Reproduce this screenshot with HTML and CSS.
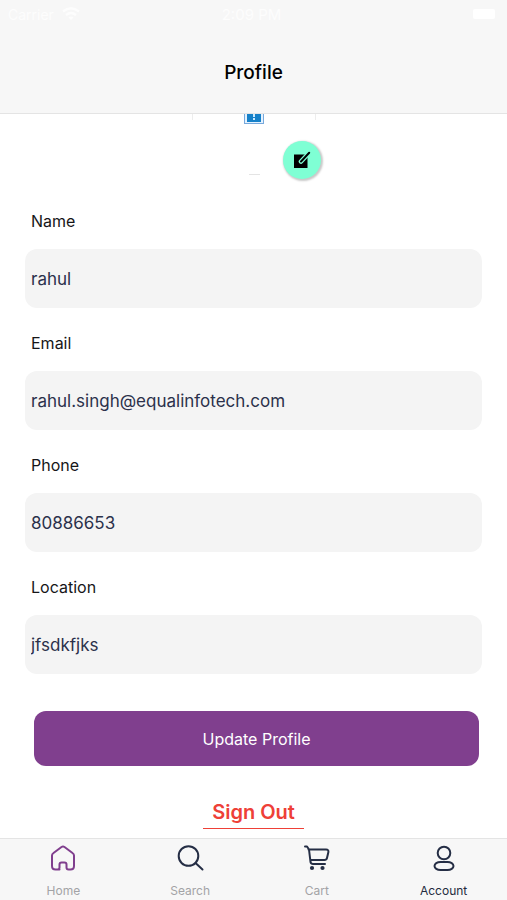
FILE: index.html
```html
<!DOCTYPE html>
<html lang="en">
<head>
<meta charset="utf-8">
<meta name="viewport" content="width=device-width, initial-scale=1">
<title>Profile</title>
<link rel="stylesheet" href="styles.css">
</head>
<body>
<header class="header">
  <div class="status">
    <span class="carrier">Carrier
      <svg width="18" height="14" viewBox="0 0 18 14" fill="none" stroke="currentColor" stroke-width="2.4" aria-hidden="true"><path d="M1 4.500Q9-2 17 4.500M4 8Q9 4 14 8"/><path d="M6.500 10.500Q9 8.500 11.500 10.500L9 13Z" fill="currentColor" stroke="none"/></svg>
    </span>
    <span class="time">2:09 PM</span>
    <span class="battery"></span>
  </div>
  <h1 class="title">Profile</h1>
</header>

<main class="content">
  <section class="photo" aria-label="Profile photo">
    <div class="frame">
      <svg width="20" height="10" viewBox="0 0 20 10" aria-hidden="true"><path fill="#78a9dc" d="M0 0h20v10H0z"/><path fill="#e4f2ff" d="M1 0h18v9H1z"/><path fill="#1681c9" d="M3 0h14v8H3z"/><path fill="#c8eaff" d="M9 0h2v3H9zM9 4h2v2H9z"/></svg>
    </div>
    <span class="dash"></span>
    <button class="edit" type="button" aria-label="Edit photo">
      <svg width="18" height="18" viewBox="0 0 18 18" fill="none" stroke-linecap="round" aria-hidden="true"><path fill="#000" d="M1 3.500h13.500V17H1z"/><path d="M15 3 8 10.500" stroke="#7fffd4" stroke-width="4.600"/><path d="M16.200 1.800 8 10.500" stroke="#000" stroke-width="2"/></svg>
    </button>
  </section>

  <form class="form">
    <label class="label" for="name">Name</label>
    <input class="input" id="name" type="text" value="rahul">
    <label class="label" for="email">Email</label>
    <input class="input" id="email" type="email" value="rahul.singh@equalinfotech.com">
    <label class="label" for="phone">Phone</label>
    <input class="input" id="phone" type="tel" value="80886653">
    <label class="label" for="location">Location</label>
    <input class="input" id="location" type="text" value="jfsdkfjks">
    <button class="update" type="button">Update Profile</button>
  </form>
  <a class="signout" href="#">Sign Out</a>
</main>

<nav class="tabs">
  <a class="tab" href="#">
    <svg class="icon home" viewBox="0 0 28 28" aria-hidden="true"><path d="M10.500 25.500H6.500Q3 25.500 3 22V11.500Q3 10 4.500 9L12.500 3Q14 2 15.500 3L23.500 9Q25 10 25 11.500V22Q25 25.500 21.500 25.500H19.500Q17.500 25.500 17.500 23.500V20.500Q17.500 18.500 15.500 18.500H12.500Q10.500 18.500 10.500 20.500V23.500Q10.500 25.500 8.500 25.500"/></svg>
    Home
  </a>
  <a class="tab" href="#">
    <svg class="icon" viewBox="0 0 28 28" aria-hidden="true"><circle cx="12.500" cy="12" r="9.800"/><path d="m19.500 19 7 6.500"/></svg>
    Search
  </a>
  <a class="tab" href="#">
    <svg class="icon" viewBox="0 0 28 28" aria-hidden="true"><path d="M2 2.500h2l2 3 1.500 12.500Q8 20 10 20H22M5.500 5.500H23Q26 5.500 25.300 8.500L24 14Q23.500 16 21.500 16H7.500"/><g fill="currentColor" stroke="none"><circle cx="9" cy="24" r="2.100"/><circle cx="19.500" cy="24" r="2.100"/></g></svg>
    Cart
  </a>
  <a class="tab active" href="#" aria-current="page">
    <svg class="icon" viewBox="0 0 28 28" aria-hidden="true"><circle cx="14" cy="9" r="6.300"/><rect x="4.500" y="18" width="19" height="8" rx="6" ry="4"/></svg>
    Account
  </a>
</nav>
</body>
</html>
```

FILE: styles.css
```css
* {
  box-sizing: border-box;
}

body {
  display: flex;
  flex-direction: column;
  min-height: 100vh;
  margin: 0;
  background: #fff;
  color: #161618;
  font-family: Inter, "Liberation Sans", sans-serif;
  font-size: 16px;
}

button,
input {
  border: 0;
  font: inherit;
}

a {
  text-decoration: none;
}

.header {
  background: #f7f7f7;
  border-bottom: 1px solid #e4e4e4;
}

.status {
  display: grid;
  grid-template-columns: 1fr auto 1fr;
  align-items: center;
  height: 28px;
  padding: 0 12px 0 8px;
  color: #fdfdfd;
  font-size: 14px;
}

.time {
  font-size: 15px;
}

.carrier {
  display: flex;
  align-items: center;
  gap: 8px;
}

.battery {
  justify-self: end;
  width: 22px;
  height: 10px;
  border-radius: 2px;
  background: #fff;
}

.title {
  margin: 0;
  padding: 33px 0 28px;
  color: #000;
  font-size: 19px;
  font-weight: 500;
  line-height: 24px;
  text-align: center;
}

.content {
  display: flex;
  flex: 1;
  flex-direction: column;
  align-items: center;
}

.photo {
  position: relative;
  width: 124px;
  height: 84px;
}

.frame {
  display: flex;
  justify-content: center;
  height: 6px;
  border: solid #ededed;
  border-width: 0 1px;
}

.frame svg {
  flex: none;
}

.dash {
  position: absolute;
  top: 60px;
  left: 57px;
  width: 11px;
  height: 1px;
  background: #e4e4e4;
}

.edit {
  position: absolute;
  top: 27px;
  left: 91px;
  display: grid;
  place-items: center;
  width: 38px;
  height: 38px;
  padding: 0;
  border-radius: 50%;
  background: #7fffd4;
  box-shadow: 1px 1px 2px 1px #c9c9c9;
}

.form {
  display: flex;
  flex-direction: column;
  align-self: stretch;
  padding: 0 25px;
}

.label {
  height: 51px;
  padding: 11px 6px 0;
  line-height: 24px;
}

.input {
  width: 100%;
  height: 59px;
  margin-bottom: 12px;
  padding: 0 6px;
  border-radius: 12px;
  background: #f4f4f4;
  color: #2b314b;
  font-size: 17px;
}

.update {
  height: 55px;
  margin: 25px 3px 0 9px;
  border-radius: 12px;
  background: #803f8e;
  color: #fff;
}

.signout {
  margin-top: 34px;
  padding: 0 9px 3px;
  border-bottom: 1px solid #ee4037;
  color: #ee4037;
  font-size: 20px;
  font-weight: 600;
  line-height: 25px;
}

.tabs {
  display: grid;
  grid-template-columns: repeat(4, 1fr);
  height: 62px;
  border-top: 1px solid #e4e4e4;
  background: #f7f7f7;
}

.tab {
  display: flex;
  flex-direction: column;
  align-items: center;
  gap: 9px;
  padding-top: 5px;
  color: #a3a3a6;
  font-size: 12px;
  line-height: 20px;
}

.active {
  color: #252b3e;
}

.icon {
  width: 28px;
  height: 28px;
  color: #252e45;
  fill: none;
  stroke: currentColor;
  stroke-width: 2;
  stroke-linecap: round;
  stroke-linejoin: round;
}

.home {
  color: #803f8e;
}
```
